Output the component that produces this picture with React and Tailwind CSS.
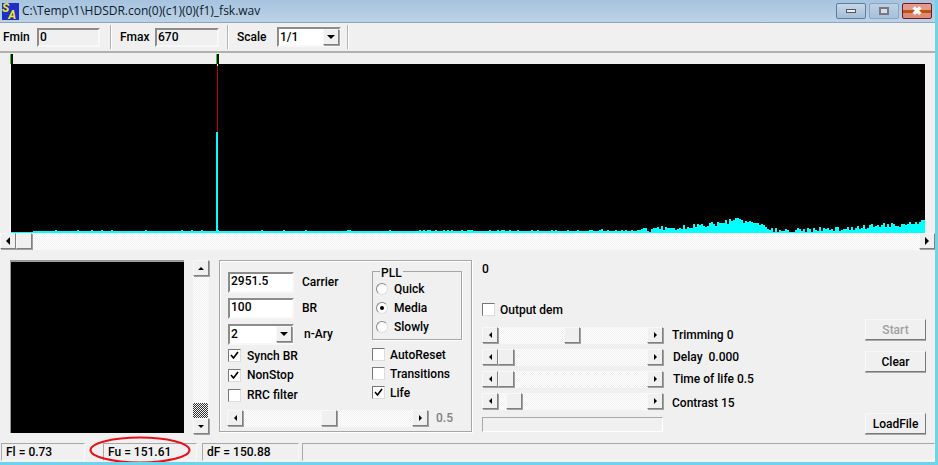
import React from "react";

// deterministic noise for the spectrum trace
const envelope = [
  [640, 3], [673, 5], [707, 8], [737, 13], [763, 8], [773, 3], [807, 3], [840, 4], [873, 7], [907, 9], [925, 13],
];
const buildSpectrum = () => {
  let seed = 17;
  const rnd = () => {
    seed = (seed * 1103515245 + 12345) & 0x7fffffff;
    return seed / 0x7fffffff;
  };
  let d = "M0 169";
  for (let x = 0; x < 914; x += 2) {
    const px = x + 11;
    let h = 1;
    if (px > 31) {
      const r = rnd();
      h = r > 0.93 ? 3 : 2;
    }
    if (px > 420) h += rnd() > 0.7 ? 1 : 0;
    if (px > 640) {
      const i = envelope.findIndex((p) => p[0] >= px);
      const [x0, y0] = envelope[Math.max(i - 1, 0)];
      const [x1, y1] = envelope[i < 0 ? envelope.length - 1 : i];
      const env = y0 + ((y1 - y0) * (px - x0)) / Math.max(x1 - x0, 1);
      h = env + (rnd() - 0.5) * 5;
    }
    const top = 169 - Math.max(1, Math.round(h));
    d += ` L${x} ${top} L${x + 2} ${top}`;
  }
  return d + " L914 169 Z";
};
const spectrum = buildSpectrum();

const dither =
  "bg-[repeating-conic-gradient(#f0f0f0_0_25%,#ffffff_0_50%)] bg-[length:2px_2px]";

const raised =
  "border border-t-[#f8f8f8] border-l-[#f8f8f8] border-r-[#808080] border-b-[#808080] bg-[#f0f0f0] shadow-[1px_1px_0_#a0a0a0]";

const sunken =
  "border-2 border-t-[#8c8c8c] border-l-[#8c8c8c] border-r-[#f8f8f8] border-b-[#f8f8f8]";

const ArrowBtn = ({ dir, small, className = "" }) => {
  const side = dir === "left" || dir === "right";
  const pts = small
    ? { left: "3,0 3,6 0,3", right: "0,0 0,6 3,3", up: "0,3 6,3 3,0", down: "0,0 6,0 3,3" }[dir]
    : { left: "4,0 4,8 0,4", right: "0,0 0,8 4,4", up: "0,4 8,4 4,0", down: "0,0 8,0 4,4" }[dir];
  const len = small ? 6 : 8;
  const dep = small ? 3 : 4;
  return (
    <div className={`flex items-center justify-center shrink-0 w-4 h-4 ${raised} ${className}`}>
      <svg width={side ? dep : len} height={side ? len : dep}>
        <polygon points={pts} fill="#000" />
      </svg>
    </div>
  );
};

const HScroll = ({ className = "", thumb, small = true }) => (
  <div className={`flex h-[17px] ${dither} ${className}`}>
    <ArrowBtn dir="left" small={small} />
    <div className="flex-1">
      <div className={`h-4 w-4 ${raised} ml-[var(--t)]`} style={{ "--t": `${thumb}px` }} />
    </div>
    <ArrowBtn dir="right" small={small} />
  </div>
);

const Check = ({ label, checked, className = "" }) => (
  <div className={`flex items-center gap-[5px] ${className}`}>
    <div className="w-[13px] h-[13px] bg-white flex items-center justify-center border border-t-[#777] border-l-[#777] border-r-[#ddd] border-b-[#ddd]">
      {checked && (
        <svg width="9" height="9" viewBox="0 0 9 9">
          <path d="M1 4 L3.5 7 L8 1" fill="none" stroke="#000" strokeWidth="1.6" />
        </svg>
      )}
    </div>
    <span>{label}</span>
  </div>
);

const Radio = ({ label, checked }) => (
  <div className="flex items-center gap-[6px] h-[19px]">
    <div className="w-[12px] h-[12px] rounded-full bg-white border border-t-[#888] border-l-[#888] border-r-[#ddd] border-b-[#ddd] flex items-center justify-center">
      {checked && <div className="w-1 h-1 rounded-full bg-black" />}
    </div>
    <span>{label}</span>
  </div>
);

const Edit = ({ value, className = "" }) => (
  <div className={`bg-white ${sunken} pl-[1px] leading-[15px] ${className}`}>{value}</div>
);

const Combo = ({ value, className = "" }) => (
  <div className={`flex items-center bg-white ${sunken} pl-[1px] ${className}`}>
    <span className="flex-1">{value}</span>
    <div className={`w-4 h-4 flex items-center justify-center ${raised}`}>
      <svg width="8" height="5">
        <polygon points="0,0 8,0 4,4" fill="#000" />
      </svg>
    </div>
  </div>
);

const Btn = ({ children, disabled, className = "" }) => (
  <div
    className={`w-[61px] h-[21px] flex items-center justify-center border border-t-[#f8f8f8] border-l-[#f8f8f8] border-r-[#777] border-b-[#777] shadow-[0_1px_0_#aaa] ${
      disabled ? "text-[#a0a0a0]" : ""
    } ${className}`}
  >
    {children}
  </div>
);

const Sep = () => <div className="w-[2px] h-[24px] bg-[#b4b4b4] border-r border-white" />;

const Marker = ({ className = "" }) => (
  <div className={`w-[3px] h-[10px] bg-[#111] border-l border-[#22cc22] ${className}`} />
);

const StatusCell = ({ children, className = "" }) => (
  <div className={`h-[18px] flex items-center pl-[4px] border border-t-[#a8a8a8] border-l-[#a8a8a8] border-r-[#f8f8f8] border-b-[#f8f8f8] ${className}`}>
    {children}
  </div>
);

const WinBtn = ({ className = "", children }) => (
  <div className={`w-[30px] h-[16px] rounded-[2px] flex items-center justify-center border ${className}`}>
    {children}
  </div>
);

export default function App() {
  return (
    <div
      className="w-[938px] h-[465px] flex flex-col overflow-hidden bg-[#f0f0f0] text-[12px] text-black border-r-[3px] border-r-[#6fd3ea] border-b-[3px] border-b-[#6fd3ea] relative font-medium"
      style={{ fontFamily: '"Roboto", "Liberation Sans", sans-serif' }}
    >
      {/* title bar */}
      <div className="h-[23px] shrink-0 flex items-center pl-[2px] pr-[3px] bg-gradient-to-b from-[#a7c3df] to-[#bdd2e6] border-b border-[#8ea6bc]">
        <div className="w-[17px] h-[17px] flex bg-[#1c2fc8] text-[#f4e61a] text-[12px] font-bold leading-[10px] italic shrink-0">
          <span className="self-start">S</span>
          <span className="self-end -ml-[1px]">A</span>
        </div>
        <span className="ml-[3px] text-[12px] font-normal text-[#0c1c2c]" style={{ fontFamily: '"Open Sans", sans-serif' }}>
          C:\Temp\1\HDSDR.con(0)(c1)(0)(f1)_fsk.wav
        </span>
        <div className="ml-auto flex gap-[3px]">
          <WinBtn className="bg-gradient-to-b from-[#c4d8ea] to-[#a2bed8] border-[#5f7f9c]">
            <div className="w-[10px] h-[4px] bg-[#eee] border border-[#556]" />
          </WinBtn>
          <WinBtn className="bg-gradient-to-b from-[#bcd2e6] to-[#a6c0da] border-[#8aa6c0]">
            <div className="w-[10px] h-[8px] bg-[#ddd] border-2 border-[#778]" />
          </WinBtn>
          <WinBtn className="bg-[linear-gradient(#e39a88_0_45%,#b8560f_45%_65%,#dd8a76_65%)] border-[#6a1c2c]">
            <span className="text-white text-[12px] font-bold leading-none">✖</span>
          </WinBtn>
        </div>
      </div>

      {/* toolbar */}
      <div className="h-[30px] shrink-0 flex items-center border-b-2 border-[#b0b0b0] pl-[3px]">
        <span className="w-[34px]">Fmin</span>
        <Edit value="0" className="w-[63px] h-[19px] !bg-[#f0f0f0]" />
        <div className="ml-[10px] mr-[8px]"><Sep /></div>
        <span className="w-[35px]">Fmax</span>
        <Edit value="670" className="w-[64px] h-[19px] !bg-[#f0f0f0]" />
        <div className="ml-[8px] mr-[8px]"><Sep /></div>
        <span className="w-[40px]">Scale</span>
        <Combo value="1/1" className="w-[64px] h-[20px]" />
        <div className="ml-[6px]"><Sep /></div>
      </div>

      {/* marker strip */}
      <div className="h-[11px] shrink-0 flex items-end pl-[10px]">
        <Marker />
        <Marker className="ml-[203px]" />
      </div>

      {/* spectrum */}
      <div className="shrink-0 pl-[11px]">
        <svg width="914" height="169" className="block bg-black">
          <rect x="206" y="0" width="1" height="2" fill="#ffffff" />
          <rect x="206" y="2" width="1" height="66" fill="#c00000" />
          <rect x="205" y="68" width="2" height="101" fill="#00ffff" />
          <path d={spectrum} fill="#00ffff" />
        </svg>
      </div>
      <HScroll className="shrink-0" thumb={0} small={false} />

      {/* lower area */}
      <div className="flex-1 flex pl-[10px] pt-[10px]">
        <div className="w-[174px] h-[173px] bg-black border-t-2 border-l border-[#999]" />

        <div className={`ml-[9px] w-[16px] h-[174px] flex flex-col ${dither}`}>
          <ArrowBtn dir="up" small />
          <div className="flex-1 flex items-end">
            <div className="w-[15px] h-[15px] bg-[repeating-conic-gradient(#333_0_25%,#f4f4f4_0_50%)] bg-[length:2px_2px]" />
          </div>
          <ArrowBtn dir="down" small />
        </div>

        {/* demod settings */}
        <div className="ml-[10px] w-[253px] h-[172px] border border-[#a6a6a6] shadow-[inset_1px_1px_0_#fff,1px_1px_0_#fff] pl-[8px] pt-[10px]">
          <div className="flex h-[136px]">
            <div className="w-[144px]">
              <div className="flex items-center h-[22px]">
                <Edit value="2951.5" className="w-[66px] h-[21px]" />
                <span className="ml-[8px]">Carrier</span>
              </div>
              <div className="flex items-center h-[22px] mt-[4px]">
                <Edit value="100" className="w-[66px] h-[21px]" />
                <span className="ml-[8px]">BR</span>
              </div>
              <div className="flex items-center h-[22px] mt-[4px]">
                <Combo value="2" className="w-[66px] h-[21px]" />
                <span className="ml-[10px]">n-Ary</span>
              </div>
              <Check label="Synch BR" checked className="mt-[1px] h-[19px] gap-[6px]" />
              <Check label="NonStop" checked className="h-[20px] gap-[6px]" />
              <Check label="RRC filter" className="h-[20px] gap-[6px]" />
            </div>
            <div className="flex flex-col">
              <div className="w-[90px] h-[69px] border border-[#a6a6a6] shadow-[1px_1px_0_#fff] pl-[3px] pt-[7px] relative">
                <span className="absolute left-[7px] -top-[8px] bg-[#f0f0f0] px-[1px]">PLL</span>
                <Radio label="Quick" />
                <Radio label="Media" checked />
                <Radio label="Slowly" />
              </div>
              <Check label="AutoReset" className="mt-[5px] h-[19px]" />
              <Check label="Transitions" className="h-[19px]" />
              <Check label="Life" checked className="h-[19px]" />
            </div>
          </div>
          <div className="flex items-center mt-[2px]">
            <HScroll className="w-[201px] -ml-[1px]" thumb={78} />
            <span className="ml-[8px] text-[#808080]">0.5</span>
          </div>
        </div>

        {/* right controls */}
        <div className="ml-[10px] w-[182px] shrink-0">
          <div className="h-[16px] pt-[2px] leading-[14px]">0</div>
          <Check label="Output dem" className="mt-[26px] h-[15px]" />
          <HScroll className="w-[181px] mt-[10px]" thumb={66} />
          <HScroll className="w-[181px] mt-[5px]" thumb={0} />
          <HScroll className="w-[181px] mt-[5px]" thumb={0} />
          <HScroll className="w-[181px] mt-[5px]" thumb={8} />
          <div className="w-[181px] h-[15px] mt-[7px] border border-t-[#a8a8a8] border-l-[#a8a8a8] border-r-[#fff] border-b-[#fff]" />
        </div>

        <div className="ml-[8px] w-[111px] pt-[64px]">
          <div className="h-[22px] pt-[2px]">Trimming 0</div>
          <div className="h-[22px] pt-[2px] pl-[1px]">Delay&nbsp; 0.000</div>
          <div className="h-[22px] pt-[2px] pl-[1px]">Time of life 0.5</div>
          <div className="h-[22px] pt-[4px]">Contrast 15</div>
        </div>

        <div className="ml-[82px] pt-[59px]">
          <Btn disabled>Start</Btn>
          <Btn className="mt-[11px]">Clear</Btn>
          <Btn className="mt-[41px]">LoadFile</Btn>
        </div>
      </div>

      {/* status bar */}
      <div className="h-[19px] shrink-0 flex pl-[1px] gap-[3px]">
        <StatusCell className="w-[84px] mr-[15px]">Fl = 0.73</StatusCell>
        <StatusCell className="w-[94px] mr-[2px]">Fu = 151.61</StatusCell>
        <StatusCell className="w-[97px]">dF = 150.88</StatusCell>
        <StatusCell className="flex-1" />
      </div>

      {/* red marker drawn over the status bar */}
      <svg width="104" height="30" className="absolute left-[88px] top-[435px]">
        <ellipse cx="52" cy="15" rx="49.5" ry="12.5" fill="none" stroke="#e8101a" strokeWidth="2" />
      </svg>
    </div>
  );
}
